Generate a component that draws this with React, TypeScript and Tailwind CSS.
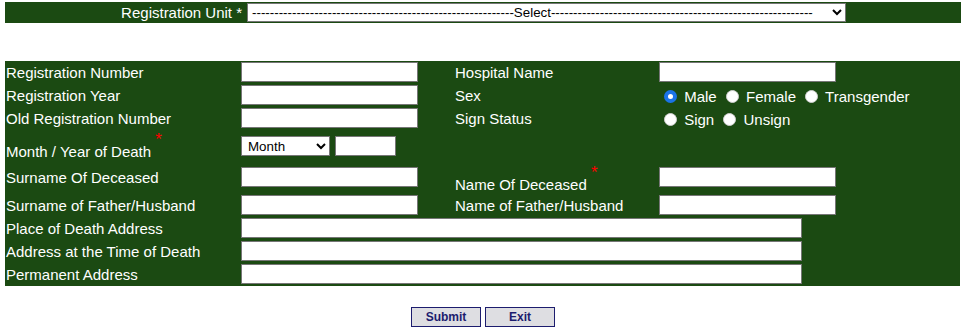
import React from "react";

const dashes = "-".repeat(59);

function TextBox({ className = "w-[177px]" }: { className?: string }) {
  return (
    <input
      type="text"
      className={`h-[20px] border border-[#767676] bg-white px-[2px] text-[13.33px] text-black ${className}`}
    />
  );
}

function Radio({ name, checked }: { name: string; checked?: boolean }) {
  return (
    <input
      type="radio"
      name={name}
      defaultChecked={checked}
      className="ml-[5px] mr-[3px] mt-[3px] inline-block h-[13px] w-[13px] appearance-none rounded-full border border-[#d0d0d0] bg-white align-[-1px] checked:border-[4px] checked:border-[#1a73e8]"
    />
  );
}

function Star() {
  return <span className="relative -top-[12px] text-[17px] text-[#ff0000]">*</span>;
}

export default function App() {
  return (
    <div className="min-h-[331px] bg-white pt-[2px] font-['Liberation_Sans',Arial,sans-serif] text-[15px] leading-[17px] text-white">
      {/* registration unit bar */}
      <div className="ml-[5px] flex h-[21px] w-[956px] bg-[#1b4a12]">
        <div className="flex w-[242px] items-center justify-end pr-[5px]">
          Registration Unit *
        </div>
        <select
          defaultValue="0"
          className="mt-px h-[19px] w-[599px] border border-[#767676] bg-white text-[13.33px] leading-[15px] text-black"
        >
          <option value="0">
            {dashes}Select{dashes}
          </option>
        </select>
      </div>

      {/* main form block */}
      <div className="ml-[5px] mt-[38px] grid w-[955px] grid-cols-[236px_214px_204px_1fr] grid-rows-[23px_23px_23px_33px_31px_23px_23px_23px_23px] bg-[#1b4a12]">
        <div className="flex items-center pl-px">Registration Number</div>
        <div className="pt-px">
          <TextBox />
        </div>
        <div className="flex items-center">Hospital Name</div>
        <div className="pt-px">
          <TextBox />
        </div>

        <div className="flex items-center pl-px">Registration Year</div>
        <div className="pt-px">
          <TextBox />
        </div>
        <div className="flex items-center">Sex</div>
        <div className="flex items-center">
          <div>
            <Radio name="sex" checked /> Male <Radio name="sex" /> Female{" "}
            <Radio name="sex" /> Transgender
          </div>
        </div>

        <div className="flex items-center pl-px">Old Registration Number</div>
        <div className="pt-px">
          <TextBox />
        </div>
        <div className="flex items-center">Sign Status</div>
        <div className="flex items-center">
          <div>
            <Radio name="sign" /> Sign <Radio name="sign" /> Unsign
          </div>
        </div>

        <div className="flex items-end pb-[3px] pl-px">
          <span>
            Month / Year of Death <Star />
          </span>
        </div>
        <div className="flex items-start gap-[5px] pt-[6px]">
          <select
            defaultValue="0"
            className="h-[20px] w-[89px] border border-[#767676] bg-white pl-[2px] text-[13.33px] leading-[15px] text-black"
          >
            <option value="0">Month</option>
            <option value="1">January</option>
            <option value="2">February</option>
            <option value="3">March</option>
          </select>
          <TextBox className="w-[61px]" />
        </div>
        <div></div>
        <div></div>

        <div className="pl-px pt-[6px]">Surname Of Deceased</div>
        <div className="pt-[4px]">
          <TextBox />
        </div>
        <div className="flex items-end pb-px">
          <span>
            Name Of Deceased <Star />
          </span>
        </div>
        <div className="pt-[4px]">
          <TextBox />
        </div>

        <div className="flex items-center pl-px">Surname of Father/Husband</div>
        <div className="pt-px">
          <TextBox />
        </div>
        <div className="flex items-center">Name of Father/Husband</div>
        <div className="pt-px">
          <TextBox />
        </div>

        <div className="flex items-center pl-px">Place of Death Address</div>
        <div className="col-span-3 pt-px">
          <TextBox className="w-[561px]" />
        </div>

        <div className="flex items-center pl-px">Address at the Time of Death</div>
        <div className="col-span-3 pt-px">
          <TextBox className="w-[561px]" />
        </div>

        <div className="flex items-center pl-px">Permanent Address</div>
        <div className="col-span-3 pt-px">
          <TextBox className="w-[561px]" />
        </div>
      </div>

      {/* actions */}
      <div className="mt-[21px] flex w-[966px] justify-center gap-[4px]">
        <button className="h-[20px] w-[70px] border border-[#1c1c6e] bg-[#dedee2] text-[12px] font-bold text-[#1c1c6e]">
          Submit
        </button>
        <button className="h-[20px] w-[70px] border border-[#1c1c6e] bg-[#dedee2] text-[12px] font-bold text-[#1c1c6e]">
          Exit
        </button>
      </div>
    </div>
  );
}
